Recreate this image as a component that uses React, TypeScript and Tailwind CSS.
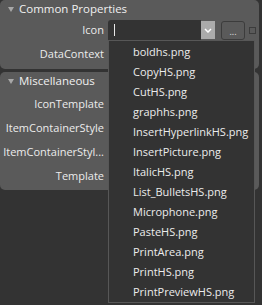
import type { ReactNode } from 'react'

const files = [
  'boldhs.png',
  'CopyHS.png',
  'CutHS.png',
  'graphhs.png',
  'InsertHyperlinkHS.png',
  'InsertPicture.png',
  'ItalicHS.png',
  'List_BulletsHS.png',
  'Microphone.png',
  'PasteHS.png',
  'PrintArea.png',
  'PrintHS.png',
  'PrintPreviewHS.png',
]

function Header({ title }: { title: string }) {
  return (
    <div className="flex h-[18px] items-center gap-[5px] pl-[8px] text-[11.5px] text-[#f0f0f0]">
      <svg width="6" height="5" viewBox="0 0 6 5" className="mt-[1px]">
        <polygon points="0,0 6,0 3,5" fill="#a8a8a8" />
      </svg>
      <span>{title}</span>
    </div>
  )
}

function Row({ label, h = 24, children }: { label: string; h?: number; children?: ReactNode }) {
  return (
    <div className="flex items-center" style={{ height: h }}>
      <div className="w-[108px] shrink-0 whitespace-nowrap pr-[4px] text-right text-[11px] text-[#ececec]">
        {label}
      </div>
      <div className="flex flex-1 items-center">{children}</div>
    </div>
  )
}

export default function App() {
  return (
    <div
      className="relative h-[305px] w-[262px] overflow-hidden bg-[#333333]"
      style={{ fontFamily: '"Open Sans", "Noto Sans", sans-serif' }}
    >
      <div className="flex w-[259px] flex-col gap-[3px]">
        <section className="h-[69px] rounded-[5px] bg-[#5a5a5a]">
          <Header title="Common Properties" />
          <Row label="Icon" h={24}>
            <div className="flex h-[20px] w-[93px] items-center rounded-tl-[3px] bg-[#333333] pl-[6px]">
              <div className="h-[12px] w-px bg-[#e8e8e8]" />
            </div>
            <div className="flex h-[18px] w-[14px] items-center justify-center bg-[#ababab]">
              <svg width="8" height="5" viewBox="0 0 8 5">
                <polyline points="1,1 4,4 7,1" fill="none" stroke="#fff" strokeWidth="1.5" />
              </svg>
            </div>
            <div className="ml-[6px] flex h-[19px] w-[24px] items-end justify-center rounded-[3px] border border-[#3c3c3c] pb-[3px] text-[9px] leading-none text-[#e0e0e0]">
              ...
            </div>
            <div className="ml-[4px] h-[7px] w-[7px] border border-[#3c3c3c]" />
          </Row>
          <Row label="DataContext" h={25} />
        </section>

        <section className="h-[118px] rounded-[5px] bg-[#5a5a5a]">
          <Header title="Miscellaneous" />
          <div className="h-[2px]" />
          <Row label="IconTemplate" />
          <Row label="ItemContainerStyle" />
          <Row label="ItemContainerStyl..." />
          <Row label="Template" />
        </section>
      </div>

      <div className="absolute left-[108px] top-[40px] h-[263px] w-[147px] border border-[#575757] bg-[#333333] pt-[1px]">
        {files.map((f) => (
          <div key={f} className="flex h-[20px] items-center pl-[24px] text-[11px] text-[#ececec]">
            {f}
          </div>
        ))}
      </div>
    </div>
  )
}
